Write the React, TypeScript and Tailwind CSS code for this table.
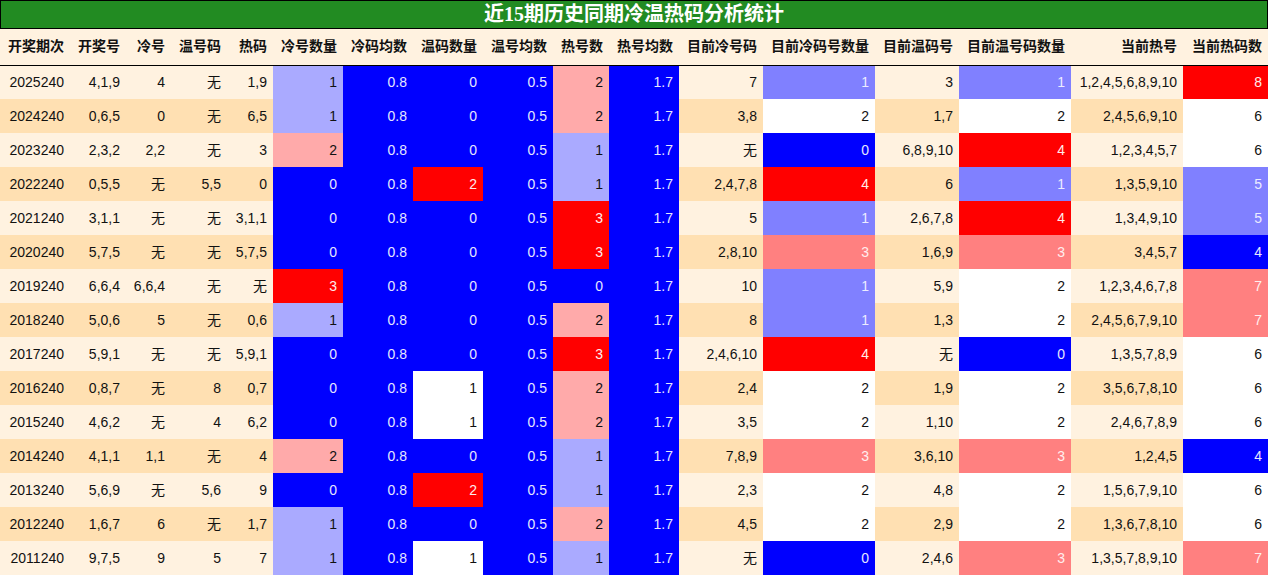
const headers = [
  "开奖期次", "开奖号", "冷号", "温号码", "热码", "冷号数量", "冷码均数", "温码数量",
  "温号均数", "热号数", "热号均数", "目前冷号码", "目前冷码号数量", "目前温码号",
  "目前温号码数量", "当前热号", "当前热码数",
];

const widths = [70, 56, 45, 56, 46, 70, 70, 70, 70, 56, 70, 84, 112, 84, 112, 112, 85];

// [期次, 开奖号, 冷号, 温号码, 热码, 冷号数量, 温码数量, 热号数, 目前冷号码, 目前冷码号数量, 目前温码号, 目前温号码数量, 当前热号, 当前热码数]
type Row = [string, string, string, string, string, number, number, number, string, number, string, number, string, number];

const rows: Row[] = [
  ["2025240", "4,1,9", "4", "无", "1,9", 1, 0, 2, "7", 1, "3", 1, "1,2,4,5,6,8,9,10", 8],
  ["2024240", "0,6,5", "0", "无", "6,5", 1, 0, 2, "3,8", 2, "1,7", 2, "2,4,5,6,9,10", 6],
  ["2023240", "2,3,2", "2,2", "无", "3", 2, 0, 1, "无", 0, "6,8,9,10", 4, "1,2,3,4,5,7", 6],
  ["2022240", "0,5,5", "无", "5,5", "0", 0, 2, 1, "2,4,7,8", 4, "6", 1, "1,3,5,9,10", 5],
  ["2021240", "3,1,1", "无", "无", "3,1,1", 0, 0, 3, "5", 1, "2,6,7,8", 4, "1,3,4,9,10", 5],
  ["2020240", "5,7,5", "无", "无", "5,7,5", 0, 0, 3, "2,8,10", 3, "1,6,9", 3, "3,4,5,7", 4],
  ["2019240", "6,6,4", "6,6,4", "无", "无", 3, 0, 0, "10", 1, "5,9", 2, "1,2,3,4,6,7,8", 7],
  ["2018240", "5,0,6", "5", "无", "0,6", 1, 0, 2, "8", 1, "1,3", 2, "2,4,5,6,7,9,10", 7],
  ["2017240", "5,9,1", "无", "无", "5,9,1", 0, 0, 3, "2,4,6,10", 4, "无", 0, "1,3,5,7,8,9", 6],
  ["2016240", "0,8,7", "无", "8", "0,7", 0, 1, 2, "2,4", 2, "1,9", 2, "3,5,6,7,8,10", 6],
  ["2015240", "4,6,2", "无", "4", "6,2", 0, 1, 2, "3,5", 2, "1,10", 2, "2,4,6,7,8,9", 6],
  ["2014240", "4,1,1", "1,1", "无", "4", 2, 0, 1, "7,8,9", 3, "3,6,10", 3, "1,2,4,5", 4],
  ["2013240", "5,6,9", "无", "5,6", "9", 0, 2, 1, "2,3", 2, "4,8", 2, "1,5,6,7,9,10", 6],
  ["2012240", "1,6,7", "6", "无", "1,7", 1, 0, 2, "4,5", 2, "2,9", 2, "1,3,6,7,8,10", 6],
  ["2011240", "9,7,5", "9", "5", "7", 1, 1, 1, "无", 0, "2,4,6", 3, "1,3,5,7,8,9,10", 7],
];

const tone = {
  blue: "bg-[#0000ff] text-[#e6e6ff]",
  mid: "bg-[#8080ff] text-[#ececff]",
  light: "bg-[#aaaaff] text-[#111111]",
  red: "bg-[#ff0000] text-[#ffecec]",
  salmon: "bg-[#ff8080] text-[#ffeeee]",
  pink: "bg-[#ffaaaa] text-[#111111]",
  white: "bg-white text-[#111111]",
};

const countTone = (v: number) => [tone.blue, tone.light, tone.pink, tone.red][v];
const warmTone = (v: number) => [tone.blue, tone.white, tone.red][v];
const nowTone = (v: number) => [tone.blue, tone.mid, tone.white, tone.salmon, tone.red][v];
const hotTone = (v: number) => nowTone(v - 4);

function Cell({ children, cls }: { children: React.ReactNode; cls: string }) {
  return <td className={`h-[34px] p-0 pr-[6px] text-right whitespace-nowrap ${cls}`}>{children}</td>;
}

export default function App() {
  return (
    <div className="w-[1268px] h-[576px] bg-white overflow-hidden">
      <div
        className="h-[29px] border border-black bg-[#228b22] text-white text-center text-[20px] font-bold leading-[27px]"
        style={{ fontFamily: '"Liberation Serif", "Noto Sans CJK SC", serif' }}
      >
        近15期历史同期冷温热码分析统计
      </div>
      <table
        className="table-fixed border-collapse w-[1268px] text-[14px] text-[#111111]"
        style={{ fontFamily: '"Liberation Sans", "Noto Sans CJK SC", sans-serif' }}
      >
        <colgroup>
          {widths.map((w, i) => (
            <col key={i} style={{ width: w }} />
          ))}
        </colgroup>
        <thead>
          <tr className="bg-[#fff2e0] border-b border-black">
            {headers.map((h) => (
              <th key={h} className="h-[36px] p-0 pr-[6px] text-right font-bold whitespace-nowrap">
                {h}
              </th>
            ))}
          </tr>
        </thead>
        <tbody>
          {rows.map((r, i) => {
            const stripe = i % 2 === 0 ? "bg-[#fff2e0]" : "bg-[#ffe0b2]";
            return (
              <tr key={r[0]}>
                <Cell cls={stripe}>{r[0]}</Cell>
                <Cell cls={stripe}>{r[1]}</Cell>
                <Cell cls={stripe}>{r[2]}</Cell>
                <Cell cls={stripe}>{r[3]}</Cell>
                <Cell cls={stripe}>{r[4]}</Cell>
                <Cell cls={countTone(r[5])}>{r[5]}</Cell>
                <Cell cls={tone.blue}>0.8</Cell>
                <Cell cls={warmTone(r[6])}>{r[6]}</Cell>
                <Cell cls={tone.blue}>0.5</Cell>
                <Cell cls={countTone(r[7])}>{r[7]}</Cell>
                <Cell cls={tone.blue}>1.7</Cell>
                <Cell cls={stripe}>{r[8]}</Cell>
                <Cell cls={nowTone(r[9])}>{r[9]}</Cell>
                <Cell cls={stripe}>{r[10]}</Cell>
                <Cell cls={nowTone(r[11])}>{r[11]}</Cell>
                <Cell cls={stripe}>{r[12]}</Cell>
                <Cell cls={hotTone(r[13])}>{r[13]}</Cell>
              </tr>
            );
          })}
        </tbody>
      </table>
    </div>
  );
}
